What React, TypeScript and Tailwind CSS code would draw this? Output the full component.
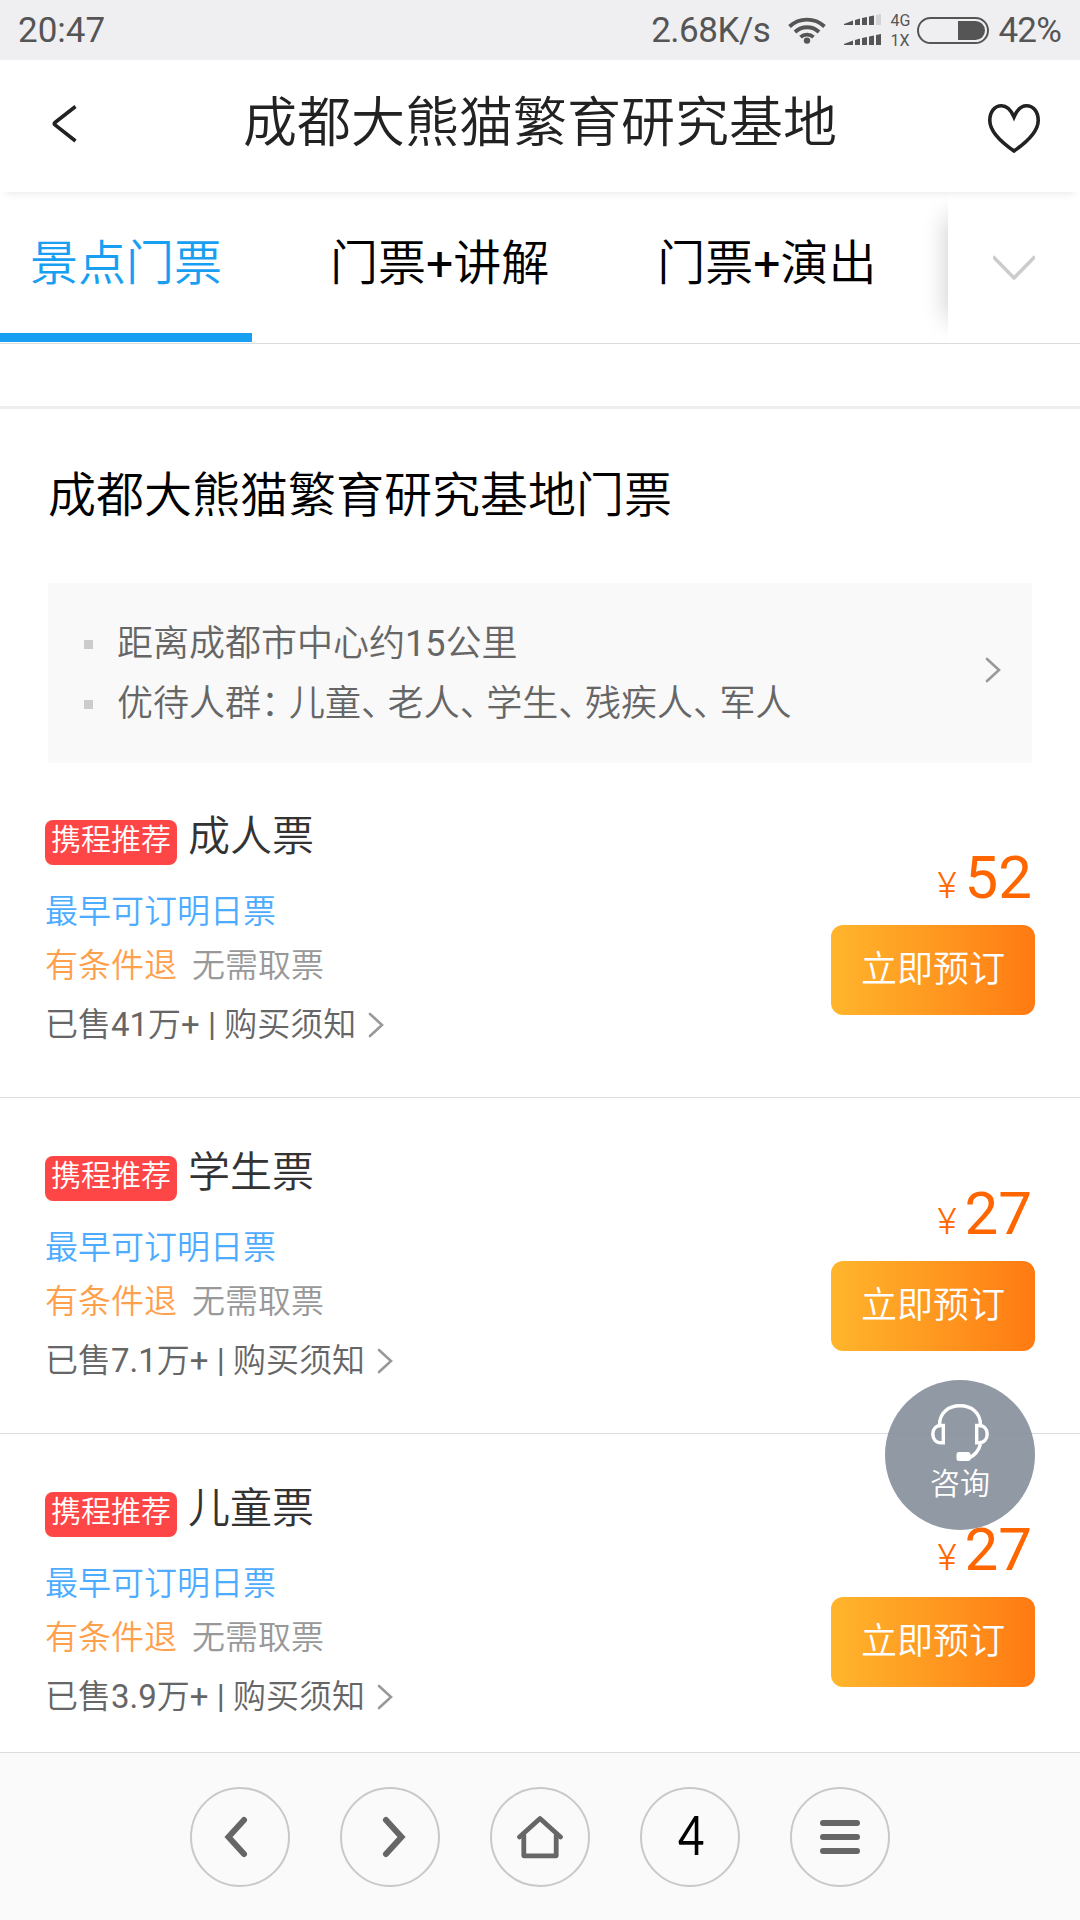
import type { ReactNode } from 'react';

const tickets = [
  { name: '成人票', sold: '41', price: 52 },
  { name: '学生票', sold: '7.1', price: 27 },
  { name: '儿童票', sold: '3.9', price: 27 },
];

const tabs = [['景点门票'], ['门票', '讲解'], ['门票', '演出']];

const groups = ['儿童', '老人', '学生', '残疾人', '军人'];

function StatusBar() {
  return (
    <div className="flex h-[60px] shrink-0 items-center bg-[#efeff1] pl-[18px] pr-[19px] text-[35px] font-normal leading-[60px] text-[#555]">
      <span className="flex-1 pt-[2px]">20:47</span>
      <span className="mr-[18px] pt-[2px] tracking-[-0.5px]">2.68K/s</span>
      <svg width="38" height="28" viewBox="0 0 38 28" className="mr-[18px]" fill="none" stroke="#555" strokeWidth="3.8">
        <path d="M1.5 10.5a25.5 25.5 0 0 1 35 0" />
        <path d="M7 16a17.5 17.5 0 0 1 24 0" />
        <path d="M12.5 21.2a9.6 9.6 0 0 1 13 0" />
        <circle cx="19" cy="24.6" r="3.2" fill="#555" stroke="none" />
      </svg>
      <svg width="37" height="32" viewBox="0 0 37 32" className="mr-[9px]" fill="#555">
        <path d="M0 10l9-3.500v4.500H0zM11 6l5-1.500v6.500h-5zM18 4l5-1v8h-5zM25 2.500l5-1v9.500h-5z" />
        <path d="M32 1l5-1v11h-5z" fill="#d3d3d5" />
        <path d="M0 30l9-3.500v4.500H0zM11 26l5-1.500v6.500h-5zM18 24l5-1v8h-5zM25 22.500l5-1v9.500h-5zM32 21l5-1v11h-5z" />
      </svg>
      <div className="mr-[6px] w-[21px] pt-[2px] text-[16px] leading-[20px]">
        <div>4G</div>
        <div>1X</div>
      </div>
      <div className="mr-[9px] flex h-[27px] w-[72px] justify-end rounded-full border-2 border-[#555] p-[2px]">
        <div className="h-full w-[27px] rounded-r-full bg-[#555]" />
      </div>
      <span className="pt-[2px] tracking-[-0.8px]">42%</span>
    </div>
  );
}

function Header() {
  return (
    <header className="relative z-10 flex h-[132px] shrink-0 items-center bg-white shadow-[0_7px_7px_-5px_rgba(0,0,0,0.08)]">
      <svg width="26" height="40" viewBox="0 0 26 40" className="mb-[4px] ml-[51px]" fill="none" stroke="#222" strokeWidth="3.6">
        <path d="M24.500 2.500L4 18.500q-1.500 1.200 0 2.400L24.500 37" />
      </svg>
      <h1 className="flex-1 pl-[16px] pb-[4px] text-center text-[54px] leading-[80px] text-[#222]">成都大熊猫繁育研究基地</h1>
      <svg width="54" height="50" viewBox="0 0 54 50" className="mr-[39px] mt-[4px]" fill="none" stroke="#222" strokeWidth="3.6">
        <path d="M27 14C23.500 6 19.500 2.800 14.500 2.800 7.500 2.800 2.800 9 2.800 17.500 2.800 28.500 14 39 27 48 40 39 51.200 28.500 51.200 17.500 51.200 9 46.500 2.800 39.500 2.800 34.500 2.800 30.500 6 27 14z" />
      </svg>
    </header>
  );
}

function Tabs() {
  return (
    <nav className="flex h-[152px] shrink-0 overflow-hidden border-b border-[#dcdcdc]">
      <div className="flex flex-1 gap-[48px] text-[48px]">
        {tabs.map(([first, extra], i) => (
          <div
            key={i}
            className={`h-[150px] whitespace-nowrap px-[30px] leading-[144px] ${i === 0 ? 'border-b-[9px] border-[#199ff2] text-[#199ff2]' : 'text-black'}`}
          >
            {first}
            {extra && <span className="font-normal">+</span>}
            {extra}
          </div>
        ))}
      </div>
      <div className="relative w-[132px]">
        <div className="absolute left-0 top-[24px] h-[104px] w-[60px] shadow-[0_0_26px_rgba(0,0,0,0.22)]" />
        <div className="relative flex h-full items-center justify-center bg-white">
          <svg width="42" height="26" viewBox="0 0 42 26" fill="none" stroke="#ccc" strokeWidth="3.6">
            <path d="M0 1.500l21 21.500L42 1.500" />
          </svg>
        </div>
      </div>
    </nav>
  );
}

function Bullet({ children }: { children: ReactNode }) {
  return (
    <li className="flex items-center gap-[24px]">
      <span className="h-[9px] w-[9px] bg-[#ccc]" />
      <span>{children}</span>
    </li>
  );
}

function Chevron() {
  return (
    <svg width="16" height="26" viewBox="0 0 16 26" fill="none" stroke="#999" strokeWidth="2.6" strokeLinecap="round">
      <path d="M2 2l12 11L2 24" />
    </svg>
  );
}

function Ticket({ name, sold, price }: { name: string; sold: string; price: number }) {
  return (
    <section className="flex h-[336px] shrink-0 justify-between border-b border-[#dcdcdc] pl-[45px] pr-[45px]">
      <div className="text-[33px]">
        <div className="mt-[46px] flex h-[57px]">
          <span className="mt-[12px] h-[45px] w-[132px] rounded-[8px] bg-[#ff4646] text-center text-[30px] leading-[40px] text-white">携程推荐</span>
          <span className="ml-[11px] text-[42px] leading-[57px] text-[#333]">{name}</span>
        </div>
        <div className="mt-[20px] leading-[54px] text-[#4dacff]">最早可订明日票</div>
        <div className="flex gap-[15px] leading-[54px]">
          <span className="text-[#ffa04d]">有条件退</span>
          <span className="text-[#999]">无需取票</span>
        </div>
        <div className="mt-[5px] flex items-center gap-[12px] leading-[54px] text-[#666]">
          <span>
            已售<span className="font-normal">{sold}</span>万<span className="font-normal">+ | </span>购买须知
          </span>
          <Chevron />
        </div>
      </div>
      <div className="flex flex-col items-end">
        <div className="relative z-20 mt-[81px] flex items-baseline gap-[8px] pr-[3px] font-normal leading-[70px] text-[#ff6600]">
          <span className="text-[37px] font-[350]">¥</span>
          <span className="text-[60px] leading-[70px]">{price}</span>
        </div>
        <button className="mt-[4px] h-[90px] w-[204px] rounded-[12px] bg-linear-to-r from-[#ffb52c] to-[#ff7a12] text-[36px] leading-[91px] text-white">立即预订</button>
      </div>
    </section>
  );
}

function NavButton({ children }: { children: ReactNode }) {
  return <button className="flex h-[100px] w-[100px] items-center justify-center rounded-full border-2 border-[#c9c9c9]">{children}</button>;
}

function BottomBar() {
  return (
    <footer className="flex h-[168px] shrink-0 items-center justify-center gap-[50px] border-t border-[#ddd] bg-[#fafafa]">
      <NavButton>
        <svg width="40" height="44" viewBox="0 0 40 44" fill="none" stroke="#666" strokeWidth="6" strokeLinecap="round">
          <path d="M24 5L8.500 22 24 39" />
        </svg>
      </NavButton>
      <NavButton>
        <svg width="40" height="44" viewBox="0 0 40 44" fill="none" stroke="#666" strokeWidth="6" strokeLinecap="round">
          <path d="M16 5L31.500 22 16 39" />
        </svg>
      </NavButton>
      <NavButton>
        <svg width="46" height="44" viewBox="0 0 46 44" fill="none" stroke="#666" strokeWidth="4.800" strokeLinecap="round" strokeLinejoin="round">
          <path d="M2.500 22L23 3.500 43.500 22" />
          <path d="M6.800 20v20.800h32.400V20" />
        </svg>
      </NavButton>
      <NavButton>
        <span className="scale-x-85 pb-[3px] pl-[3px] font-['Lato'] text-[54px] font-normal leading-[60px] text-black">4</span>
      </NavButton>
      <NavButton>
        <div className="flex w-[40px] flex-col gap-[8px]">
          <span className="h-[6px] rounded-full bg-[#666]" />
          <span className="h-[6px] rounded-full bg-[#666]" />
          <span className="h-[6px] rounded-full bg-[#666]" />
        </div>
      </NavButton>
    </footer>
  );
}

export default function App() {
  return (
    <div className="relative flex h-[1920px] w-[1080px] flex-col overflow-hidden bg-white font-['Roboto','Noto_Sans_CJK_SC',sans-serif] font-[350]">
      <StatusBar />
      <Header />
      <Tabs />

      <main className="flex flex-1 flex-col overflow-hidden">
        <div className="h-[65px] shrink-0 border-b-[3px] border-[#eee]" />
        <h2 className="mx-[48px] my-[50px] shrink-0 text-[48px] leading-[74px] text-black">成都大熊猫繁育研究基地门票</h2>

        {/* Notice */}
        <div className="mx-[48px] -mb-px flex h-[180px] shrink-0 items-center justify-between bg-[#f9f9f9] pl-[36px] pr-[31px]">
          <ul className="pt-[2px] text-[36px] leading-[60px] text-[#666]">
            <Bullet>
              距离成都市中心约<span className="font-normal">15</span>公里
            </Bullet>
            <Bullet>
              优待人群<span className="tracking-[-8px]">：</span>
              {groups.map((g, i) => (
                <span key={g}>
                  {i > 0 && <span className="tracking-[-9.4px]">、</span>}
                  {g}
                </span>
              ))}
            </Bullet>
          </ul>
          <div className="mb-[7px]">
            <Chevron />
          </div>
        </div>

        {tickets.map((t) => (
          <Ticket key={t.name} {...t} />
        ))}
      </main>

      <BottomBar />

      {/* Floating support button */}
      <button className="absolute left-[885px] top-[1380px] z-10 flex h-[150px] w-[150px] flex-col items-center rounded-full bg-[#858e9b]/90 text-white">
        <svg width="58" height="58" viewBox="0 0 58 58" className="mt-[24px]" fill="none" stroke="#fff" strokeWidth="3.4">
          <path d="M8.500 21C8.500 9 17 1.800 29 1.800S49.500 9 49.500 21" />
          <path d="M12.300 21.500v17.200H10c-5 0-8.200-3.500-8.200-8.600s3.200-8.600 8.200-8.600z" />
          <path d="M45.700 21.500v17.200H48c5 0 8.200-3.500 8.200-8.600s-3.200-8.600-8.200-8.600z" />
          <path d="M49.500 40c-1.500 6-5 11-12 14.500" />
          <rect x="25.500" y="48" width="14" height="9" rx="2.500" fill="#fff" stroke="none" />
        </svg>
        <span className="text-[30px] leading-[44px]">咨询</span>
      </button>
    </div>
  );
}
